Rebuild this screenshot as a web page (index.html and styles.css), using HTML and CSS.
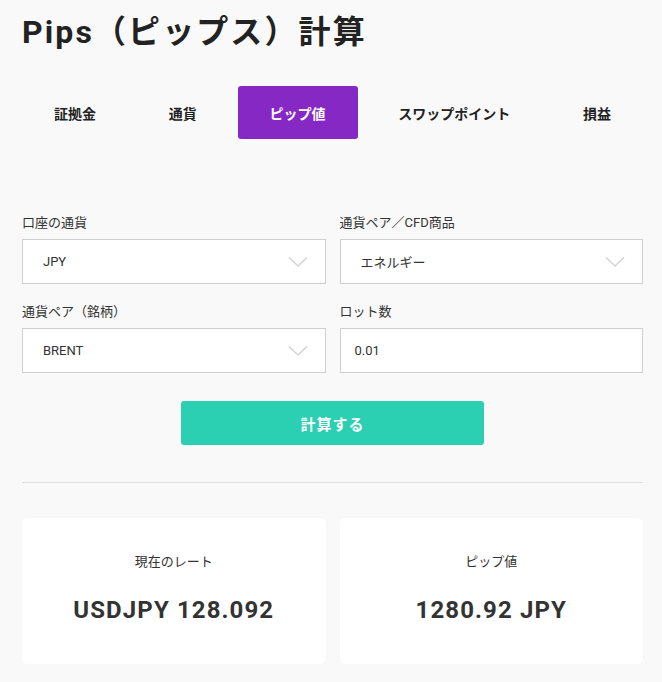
FILE: index.html
```html
<!DOCTYPE html>
<html lang="ja">
<head>
<meta charset="utf-8">
<link rel="stylesheet" href="styles.css">
</head>
<body>
<div class="page">
  <h1 class="title">Pips（ピップス）計算</h1>
  <nav class="tabs">
    <div class="tab">証拠金</div>
    <div class="tab">通貨</div>
    <div class="tab active">ピップ値</div>
    <div class="tab">スワップポイント</div>
    <div class="tab">損益</div>
  </nav>
  <div class="form">
    <div class="field">
      <label class="label">口座の通貨</label>
      <div class="select"><span>JPY</span>
        <svg class="chev" width="20" height="12" viewBox="0 0 20 12"><path d="M1 1.5 L10 10 L19 1.5" fill="none" stroke="#d4d4d4" stroke-width="1.6"/></svg>
      </div>
    </div>
    <div class="field">
      <label class="label">通貨ペア／CFD商品</label>
      <div class="select"><span>エネルギー</span>
        <svg class="chev" width="20" height="12" viewBox="0 0 20 12"><path d="M1 1.5 L10 10 L19 1.5" fill="none" stroke="#d4d4d4" stroke-width="1.6"/></svg>
      </div>
    </div>
    <div class="field">
      <label class="label">通貨ペア（銘柄）</label>
      <div class="select"><span>BRENT</span>
        <svg class="chev" width="20" height="12" viewBox="0 0 20 12"><path d="M1 1.5 L10 10 L19 1.5" fill="none" stroke="#d4d4d4" stroke-width="1.6"/></svg>
      </div>
    </div>
    <div class="field">
      <label class="label">ロット数</label>
      <div class="input">0.01</div>
    </div>
  </div>
  <div class="btn-row"><button class="btn">計算する</button></div>
  <hr class="divider">
  <div class="results">
    <div class="card">
      <div class="card-label">現在のレート</div>
      <div class="card-value">USDJPY 128.092</div>
    </div>
    <div class="card">
      <div class="card-label">ピップ値</div>
      <div class="card-value">1280.92 JPY</div>
    </div>
  </div>
</div>
</body>
</html>
```
FILE: styles.css
```css
html, body {
  margin: 0;
  padding: 0;
  background: #f9f9f9;
}
body {
  font-family: Roboto, "Noto Sans CJK JP", sans-serif;
  color: #333;
}
.page {
  padding: 0 19px 0 22px;
}
.title {
  margin: 0;
  padding-top: 12px;
  font-size: 32px;
  line-height: 40px;
  font-weight: 700;
  letter-spacing: 2.1px;
  color: #222;
}
.tabs {
  display: flex;
  justify-content: space-between;
  margin-top: 34px;
}
.tab {
  height: 53px;
  display: flex;
  align-items: center;
  padding: 0 32px;
  font-size: 14px;
  font-weight: 700;
  color: #222;
  border-radius: 3px;
}
.tab.active {
  background: #8629c4;
  color: #fff;
}
.form {
  display: grid;
  grid-template-columns: 1fr 1fr;
  column-gap: 14px;
  row-gap: 19px;
  margin-top: 75px;
}
.field {
  display: flex;
  flex-direction: column;
}
.label {
  font-size: 13px;
  line-height: 18px;
  color: #333;
  margin-bottom: 7px;
}
.select, .input {
  box-sizing: border-box;
  height: 45px;
  background: #fff;
  border: 1px solid #cfcfcf;
  display: flex;
  align-items: center;
  font-size: 13px;
  color: #333;
}
.select {
  justify-content: space-between;
  padding: 0 17px 0 20px;
}
.input {
  padding: 0 14px;
}
.chev {
  display: block;
}
.btn-row {
  display: flex;
  justify-content: center;
  margin-top: 28px;
}
.btn {
  width: 303px;
  height: 44px;
  border: none;
  border-radius: 3px;
  background: #2bcfb1;
  color: #fff;
  font-family: Roboto, "Noto Sans CJK JP", sans-serif;
  font-size: 15px;
  font-weight: 700;
  letter-spacing: 1px;
}
.divider {
  border: none;
  border-top: 1px solid #dcdcdc;
  margin: 37px 0 0;
}
.results {
  display: grid;
  grid-template-columns: 1fr 1fr;
  column-gap: 14px;
  margin-top: 35px;
}
.card {
  background: #fff;
  border-radius: 5px;
  height: 146px;
  display: flex;
  flex-direction: column;
  align-items: center;
  box-shadow: 0 0 2px rgba(0,0,0,0.03);
}
.card-label {
  margin-top: 35px;
  font-size: 13px;
  line-height: 18px;
  color: #333;
}
.card-value {
  margin-top: 24px;
  font-size: 24px;
  line-height: 30px;
  font-weight: 700;
  letter-spacing: 1.1px;
  color: #333;
}
```
